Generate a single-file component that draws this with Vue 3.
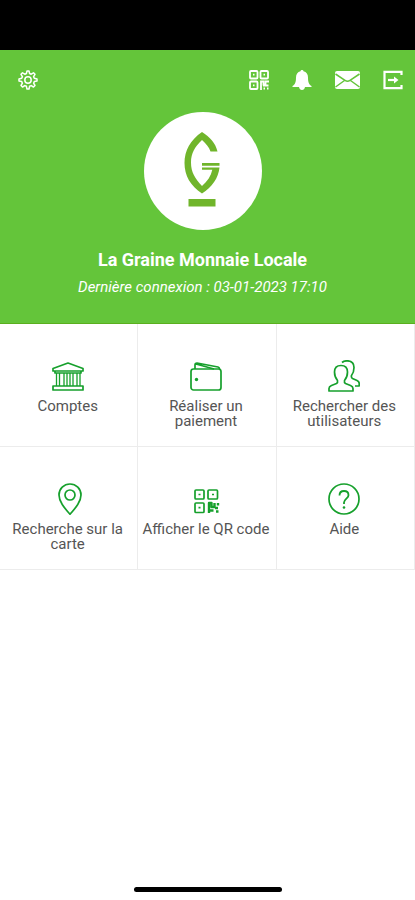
<script setup>
const actions = [
  { id: 'accounts', label: 'Comptes' },
  { id: 'pay', label: 'Réaliser un paiement' },
  { id: 'users', label: 'Rechercher des utilisateurs' },
  { id: 'map', label: 'Recherche sur la carte' },
  { id: 'qr', label: 'Afficher le QR code' },
  { id: 'help', label: 'Aide' },
]
</script>

<template>
  <div class="screen">
    <div class="status-bar"></div>

    <header class="hero">
      <nav class="toolbar">
        <button type="button" class="tool" aria-label="Paramètres">
          <svg width="20" height="20" viewBox="0 0 20 20" fill="none" stroke="currentColor" stroke-width="1.5" stroke-linejoin="round">
            <path d="M8.4 3.500 9 1h2l.6 2.500 1.600.7 2.300-1.400 1.500 1.500-1.400 2.300.7 1.600L19 9v2l-2.700.6-.7 1.600 1.400 2.300-1.500 1.500-2.300-1.400-1.600.7L11 19H9l-.6-2.700-1.600-.7L4.500 17 3 15.500l1.400-2.300-.7-1.600L1 11V9l2.700-.8.7-1.600L3 4.300l1.500-1.500 2.300 1.400z" />
            <circle cx="10" cy="10" r="3.200" />
          </svg>
        </button>
        <div class="tool-group">
          <button type="button" class="tool" aria-label="QR code">
            <svg width="20" height="20" viewBox="0 0 20 20" fill="none" stroke="currentColor" stroke-width="1.800">
              <rect x="1" y="1" width="7.500" height="7.500" rx="1" />
              <rect x="11.500" y="1" width="7.500" height="7.500" rx="1" />
              <rect x="1" y="11.500" width="7.500" height="7.500" rx="1" />
              <path d="M4 4.700h1.500M14.500 4.700H16M4 15.300h1.500" />
              <path d="M12 20v-8.500h2.500v3h2v-3H20M14 15.500h5.500M14.500 18.500h1.500M18 18.500h1.500" />
            </svg>
          </button>
          <button type="button" class="tool" aria-label="Notifications">
            <svg width="20" height="20" viewBox="0 0 20 20" fill="currentColor">
              <path d="M10 0c1 0 1.500.6 1.500 1.300C14.500 2 16 4.500 16 7.500c0 5 1 7 3.500 8.500v1H.5v-1C3 14.500 4 12.500 4 7.500c0-3 1.500-5.500 4.500-6.200C8.500.6 9 0 10 0zM7 17h6c-.3 1.800-1.500 3-3 3s-2.700-1.200-3-3z" />
            </svg>
          </button>
          <button type="button" class="tool" aria-label="Messages">
            <svg width="25" height="20" viewBox="0 0 25 20">
              <rect y="1" width="25" height="18" rx="2" fill="currentColor" />
              <path d="M.5 4 10 10.300q2.500 1.800 5 0L24.500 4M.5 17l9-6.500M24.500 17l-9-6.500" fill="none" stroke="#64c53a" stroke-width="1.500" />
            </svg>
          </button>
          <button type="button" class="tool" aria-label="Déconnexion">
            <svg width="20" height="20" viewBox="0 0 20 20" fill="none" stroke="currentColor" stroke-width="2.200">
              <path d="M18.500 5V1.800H1.500v16.400h17V15" />
              <path d="M5 10h7" />
              <path d="M11 6.500v7l4.500-3.500z" fill="currentColor" stroke="none" />
            </svg>
          </button>
        </div>
      </nav>

      <div class="profile">
        <div class="avatar">
          <svg width="36" height="78" viewBox="1 0 36 78" fill="#70b52b" overflow="visible">
            <path d="M33.500 19.500H26.500C25 15 22 11.500 18 8 11 14.500 7 21 7 30.500S11 46.500 18 54C23.500 49 27 44 28.300 37.700H18v-2.200h17.500C34.500 46 28 55 18 61.500 6.500 54 .5 43.500.5 31S6.500 8 18 0c8 5 13.500 11 15.500 19.500z" />
            <path d="M18 31h17.500v2.700H18zM4.500 67h27v7.500h-27z" />
          </svg>
        </div>
        <h1 class="name">La Graine Monnaie Locale</h1>
        <p class="last-login">Dernière connexion : 03-01-2023 17:10</p>
      </div>
    </header>

    <main class="grid">
      <button v-for="action in actions" :key="action.id" type="button" class="tile">
        <svg class="icon" width="32" height="32" viewBox="0 0 32 32" fill="none" stroke="currentColor" stroke-width="1.700" stroke-linejoin="round" aria-hidden="true">
          <template v-if="action.id === 'accounts'">
            <path d="M1 8.500 16 3l15 5.500V11H1zM1 26h30v4H1zM3 11v2h26v-2" />
            <path d="M4.500 13v13M7.500 13v13M12 13v13M15 13v13M18 13v13M21 13v13M25 13v13M28 13v13" stroke-width="1.300" />
          </template>
          <template v-else-if="action.id === 'pay'">
            <rect x="1" y="9" width="30" height="21" rx="2.500" />
            <path d="M5 9V5q0-2 2-2l21 4q1.500.500 1.500 2M6 4l18 5" />
            <circle cx="6.500" cy="19.500" r="1.700" fill="currentColor" stroke="none" />
          </template>
          <template v-else-if="action.id === 'users'">
            <path d="M1 31v-2.500q0-2 2.500-3l5-2q1.500-1 1-3Q6.500 17 6.500 12c0-4 2-6.500 6.500-6.500s6.500 2.500 6.500 6.500q0 5-3 8.500-.5 2 1 3l5 2q2.500 1 2.500 3V31z" />
            <path d="M14 2.500Q16 .8 19 .8c4.500 0 7 2.700 7 6.700q0 5-2.500 8-.5 2 1 3l4.500 2q2.200 1 2.200 3V26H27" />
          </template>
          <template v-else-if="action.id === 'map'">
            <path d="M18 31.300C12 24.500 7 18.500 7 12a11 11 0 0 1 22 0c0 6.500-5 12.500-11 19.300z" />
            <circle cx="18" cy="12" r="5" />
          </template>
          <template v-else-if="action.id === 'qr'">
            <rect x="5" y="7" width="9" height="9" rx="1" />
            <rect x="18" y="7" width="9.500" height="9" rx="1" />
            <rect x="5" y="20" width="9" height="9.500" rx="1" />
            <path d="M8.500 11.500h2M22 11.500h2M8.500 24.700h2" />
            <path d="M19 30V20h2.500v4h3v-4M28 20v2.500M25 25h3M20 27.500h3.500M26 28.500h2.500" stroke-width="2.400" />
          </template>
          <template v-else>
            <circle cx="16" cy="16" r="15" />
            <path d="M11.500 12.500c0-3 2-4.500 4.500-4.500s4.500 1.500 4.500 4.200c0 3-4.500 3.800-4.500 7.300v1.500" stroke-width="1.800" />
            <circle cx="16" cy="24.500" r="1.300" fill="currentColor" stroke="none" />
          </template>
        </svg>
        <span class="label">{{ action.label }}</span>
      </button>
    </main>

    <footer class="home-area"><div class="home-bar"></div></footer>
  </div>
</template>

<style>
body {
  margin: 0;
  background: #fff;
}
</style>

<style scoped>
.screen {
  display: flex;
  flex-direction: column;
  min-height: 100vh;
  font-family: Roboto, "Liberation Sans", sans-serif;
  color: #555;
}
.status-bar {
  height: 50px;
  background: #000;
}
.hero {
  padding-bottom: 26px;
  border-bottom: 1px solid #5aaf1e;
  background: #64c53a;
  color: #fff;
}
.toolbar {
  display: flex;
  justify-content: space-between;
  padding: 20px 12px 0 18px;
}
.tool-group {
  display: flex;
  gap: 23px;
}
.tool {
  display: flex;
  padding: 0;
  border: 0;
  background: none;
  color: inherit;
  cursor: pointer;
}
.profile {
  display: flex;
  flex-direction: column;
  align-items: center;
  padding: 22px 10px 0 0;
}
.avatar {
  display: flex;
  align-items: center;
  justify-content: center;
  width: 118px;
  height: 118px;
  margin-bottom: 18px;
  border-radius: 50%;
  background: #fff;
}
.name {
  margin: 0;
  font-size: 18px;
  line-height: 24px;
  font-weight: 700;
}
.last-login {
  margin: 5px 0 0;
  font-size: 15px;
  line-height: 20px;
  font-style: italic;
}
.grid {
  display: grid;
  grid-template-columns: repeat(3, 1fr);
}
.tile {
  display: flex;
  flex-direction: column;
  align-items: center;
  gap: 7px;
  min-height: 123px;
  padding: 36px 4px 16px 2px;
  border: 0;
  border-right: 1px solid #ececec;
  border-bottom: 1px solid #ececec;
  background: none;
  font-family: inherit;
  font-size: 15px;
  line-height: 15px;
  color: inherit;
  cursor: pointer;
}
.icon {
  flex: none;
  color: #16a02c;
}
.home-area {
  display: flex;
  justify-content: center;
  margin-top: auto;
  padding-bottom: 8px;
}
.home-bar {
  width: 148px;
  height: 5px;
  border-radius: 3px;
  background: #000;
}
</style>
